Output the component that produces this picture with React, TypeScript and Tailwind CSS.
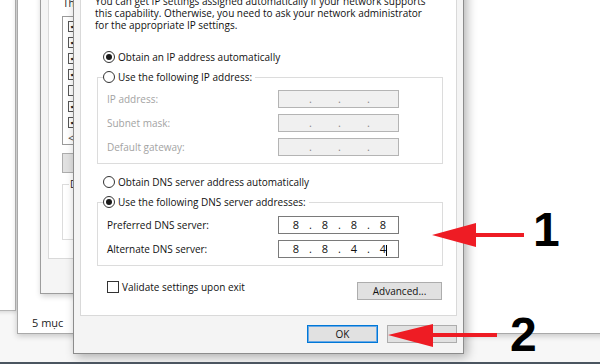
import React from "react";

function Radio({ checked, children }: { checked?: boolean; children: React.ReactNode }) {
  return (
    <div className="flex h-[14px] items-center gap-[3px]">
      <span className="flex size-[12px] items-center justify-center rounded-full border border-[#333] bg-white">
        {checked && <span className="size-[6px] rounded-full bg-[#1a1a1a]" />}
      </span>
      <span className="whitespace-nowrap">{children}</span>
    </div>
  );
}

function IpBox({ values, disabled, caret }: { values: string[]; disabled?: boolean; caret?: boolean }) {
  return (
    <div
      className={`flex h-[18px] w-[121px] items-center pl-[6px] text-[11px] ${
        disabled ? "border border-[#b4b4b4] bg-[#f0f0f0] text-[#8a8a8a]" : "border border-[#7a7a7a] bg-white text-[#111]"
      }`}
    >
      {values.map((v, i) => (
        <React.Fragment key={i}>
          <span className="relative w-[22px] text-center">
            {v}
            {caret && i === 3 && <span className="absolute left-[14px] top-[2px] h-[11px] w-px bg-black" />}
          </span>
          {i < 3 && <span className="w-[7px] text-center">.</span>}
        </React.Fragment>
      ))}
    </div>
  );
}

function IpRow({ label, values, disabled, caret }: { label: string; values: string[]; disabled?: boolean; caret?: boolean }) {
  return (
    <div className="flex h-[18px] items-center">
      <span className={`w-[175px] pl-[4px] ${disabled ? "text-[#a3a3a3]" : "text-[#111]"}`}>{label}</span>
      <IpBox values={values} disabled={disabled} caret={caret} />
    </div>
  );
}

const empty = ["", "", "", ""];

export default function App() {
  return (
    <div className="relative h-[364px] w-[600px] overflow-hidden bg-[#f7f7f7] font-['Open_Sans',sans-serif] text-[10px] leading-[12px] text-[#111]">
      {/* window far left */}
      <div className="absolute left-[-20px] top-[-20px] h-[331px] w-[36px] border border-[#b5b5b5] bg-white shadow-[1px_1px_4px_rgba(0,0,0,0.15)]" />

      {/* explorer window */}
      <div className="absolute left-[17px] right-[-20px] top-[-20px] flex h-[354px] flex-col justify-end border border-[#a9a9a9] bg-white shadow-[0_2px_6px_rgba(0,0,0,0.2)]">
        <div className="mb-[4px] pl-[14px] text-[11px] text-[#222]">5 mục</div>
      </div>

      {/* ethernet properties window, mostly behind the dialog */}
      <div className="absolute left-[40px] top-[-20px] h-[314px] w-[40px] overflow-hidden border-y border-l border-[#9d9d9d] bg-[#f5f5f5] pl-[7px] pt-[2px] shadow-[1px_2px_6px_rgba(0,0,0,0.2)]">
        <div className="h-[276px] w-[400px] border border-[#d9d9d9] bg-white pl-[13px] pt-[13px]">
          <div className="whitespace-nowrap pl-[1px] text-[#222]">Th</div>
          <div className="mt-[7px] flex h-[129px] w-[300px] flex-col border border-[#9a9a9a] bg-white pl-[5px] pt-[1px]">
            {[true, true, true, true, false, true, true].map((c, i) => (
              <div key={i} className="flex h-[16px] items-center">
                <span className="flex size-[11px] items-center justify-center border border-[#555] text-[8px] leading-none">
                  {c ? "✔" : ""}
                </span>
              </div>
            ))}
            <div className="mt-[2px] text-[11px] leading-[12px] text-[#444]">&lt;</div>
          </div>
          <div className="mt-[8px] h-[20px] w-[80px] border border-[#adadad] bg-[#e1e1e1]" />
          <fieldset className="mt-[5px] h-[62px] w-[300px] border border-[#dcdcdc] px-[6px]">
            <legend className="px-[1px] text-[#222]">D</legend>
          </fieldset>
        </div>
      </div>

      {/* internet protocol version 4 dialog */}
      <div className="absolute left-[73px] top-[-20px] flex h-[374px] w-[391px] flex-col border border-[#8c8c8c] bg-[#f4f4f4] shadow-[3px_3px_10px_rgba(0,0,0,0.3)]">
        <div className="mx-[6px] mt-[4px] h-[331px] border border-[#d9d9d9] bg-white">
          <p className="mt-[9px] whitespace-nowrap pl-[14px]">
            You can get IP settings assigned automatically if your network supports
            <br />
            this capability. Otherwise, you need to ask your network administrator
            <br />
            for the appropriate IP settings.
          </p>

          <div className="ml-[22px] mt-[19px]">
            <Radio checked>Obtain an IP address automatically</Radio>
          </div>

          <fieldset className="ml-[16px] mr-[13px] mt-[6px] border border-[#dcdcdc] px-[5px] pb-[7px]">
            <legend className="pr-[3px]">
              <Radio>Use the following IP address:</Radio>
            </legend>
            <div className="mt-[6px] flex flex-col gap-[6px]">
              <IpRow label="IP address:" values={empty} disabled />
              <IpRow label="Subnet mask:" values={empty} disabled />
              <IpRow label="Default gateway:" values={empty} disabled />
            </div>
          </fieldset>

          <div className="ml-[22px] mt-[11px]">
            <Radio>Obtain DNS server address automatically</Radio>
          </div>

          <fieldset className="ml-[16px] mr-[13px] mt-[6px] border border-[#dcdcdc] px-[5px] pb-[7px]">
            <legend className="pr-[3px]">
              <Radio checked>Use the following DNS server addresses:</Radio>
            </legend>
            <div className="mt-[7px] flex flex-col gap-[6px]">
              <IpRow label="Preferred DNS server:" values={["8", "8", "8", "8"]} />
              <IpRow label="Alternate DNS server:" values={["8", "8", "4", "4"]} caret />
            </div>
          </fieldset>

          <div className="ml-[26px] mr-[14px] mt-[14px] flex items-start justify-between">
            <div className="flex h-[14px] items-center gap-[3px]">
              <span className="size-[12px] border border-[#333] bg-white" />
              <span>Validate settings upon exit</span>
            </div>
            <div className="mt-[2px] flex h-[18px] w-[85px] items-center justify-center border border-[#adadad] bg-[#e1e1e1]">
              Advanced...
            </div>
          </div>
        </div>

        <div className="mt-[9px] flex justify-end gap-[9px] pr-[6px]">
          <div className="flex h-[18px] w-[71px] items-center justify-center border border-[#0078d7] bg-[#e1e1e1] shadow-[inset_0_0_0_1px_#6aa9e6]">
            OK
          </div>
          <div className="flex h-[18px] w-[70px] items-center justify-center border border-[#adadad] bg-[#e1e1e1]" />
        </div>
      </div>

      {/* taskbar strip */}
      <div className="absolute bottom-0 left-0 h-[2px] w-full bg-[#4b5560]" />

      {/* annotation arrows */}
      <svg className="absolute inset-0" width="600" height="364" viewBox="0 0 600 364">
        <polygon points="432,235 476,223 476,233 524,233 524,237 476,237 476,247" fill="#ee1c24" />
        <polygon points="388,335 433,324 433,333 497,333 497,337 433,337 433,347" fill="#ee1c24" />
      </svg>
      <div className="absolute left-[533px] top-[204px] font-['Liberation_Sans',sans-serif] text-[48px] font-bold leading-[52px] text-black">1</div>
      <div className="absolute left-[510px] top-[309px] font-['Liberation_Sans',sans-serif] text-[48px] font-bold leading-[52px] text-black">2</div>
    </div>
  );
}
